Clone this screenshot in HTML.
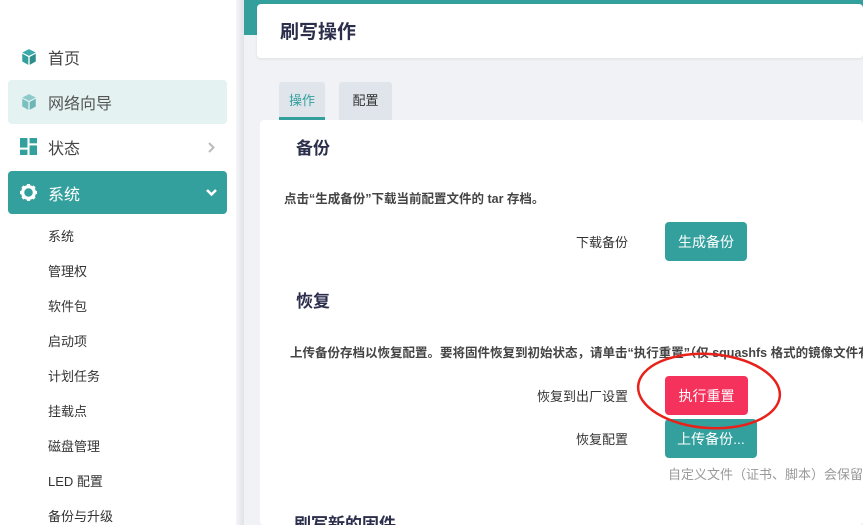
<!DOCTYPE html>
<html style="overflow:hidden;width:863px;height:525px"><head><meta charset="utf-8"><style>
*{margin:0;padding:0;box-sizing:border-box}
body{width:863px;height:525px;overflow:hidden;background:#f0f2f5;font-family:"Liberation Sans","Noto Sans CJK SC",sans-serif;position:relative;color:#333}
.side{position:absolute;left:0;top:0;width:236px;height:525px;background:#fff}
.shadow{position:absolute;left:236px;top:0;width:8px;height:525px;background:linear-gradient(90deg,#f4f6f9,#dfe2e6)}
.item{position:absolute;left:8px;width:219px;height:44px;border-radius:4px;font-size:16px;color:#444;display:flex;align-items:center;padding-left:40px}
.ic{position:absolute;left:12px;top:13px}
.sub{position:absolute;left:48px;font-size:13px;color:#333}
.abs{position:absolute}
.btn{position:absolute;left:665px;height:39px;border-radius:4px;color:#fff;font-size:14px;display:flex;align-items:center;justify-content:center}
.lbl{position:absolute;font-size:13px;color:#333;text-align:right;width:200px}
</style></head><body>
<div class="abs" style="left:244px;top:0;width:619px;height:35px;background:#34a09e"></div>
<div class="abs" style="left:257px;top:4px;width:606px;height:54px;background:#fff;border-radius:4px;box-shadow:0 1px 3px rgba(0,0,0,.08)"></div>
<div class="abs" style="left:280px;top:17px;font-size:19px;font-weight:bold;color:#2b2f4c">刷写操作</div>
<div class="abs" style="left:279px;top:82px;width:46px;height:38px;background:#dfe5ea;border-radius:3px 3px 0 0;border-bottom:3px solid #34a09e;color:#34a09e;font-size:13px;text-align:center;line-height:38px">操作</div>
<div class="abs" style="left:339px;top:82px;width:53px;height:38px;background:#dfe5ea;border-radius:3px 3px 0 0;color:#333;font-size:13px;text-align:center;line-height:38px">配置</div>
<div class="abs" style="left:260px;top:120px;width:603px;height:405px;background:#fff;border-radius:4px"></div>
<div class="abs" style="left:296px;top:134px;font-size:17px;font-weight:bold;color:#2b2f4c">备份</div>
<div class="abs" style="left:284px;top:188px;font-size:12.5px;font-weight:bold;color:#444">点击“生成备份”下载当前配置文件的 tar 存档。</div>
<div class="lbl" style="left:428px;top:232px">下载备份</div>
<div class="btn" style="top:222px;width:82px;background:#34a09e">生成备份</div>
<div class="abs" style="left:296px;top:287px;font-size:17px;font-weight:bold;color:#2b2f4c">恢复</div>
<div class="abs" style="left:290px;top:342px;font-size:12.5px;font-weight:bold;color:#444;white-space:nowrap">上传备份存档以恢复配置。要将固件恢复到初始状态，请单击“执行重置”（仅 squashfs 格式的镜像文件有效）。</div>
<div class="lbl" style="left:428px;top:386px">恢复到出厂设置</div>
<div class="btn" style="top:376px;width:83px;background:#f5325c">执行重置</div>
<div class="lbl" style="left:428px;top:429px">恢复配置</div>
<div class="btn" style="top:419px;width:92px;background:#34a09e">上传备份...</div>
<div class="abs" style="left:668px;top:464px;font-size:13px;color:#999;white-space:nowrap">自定义文件（证书、脚本）会保留</div>
<div class="abs" style="left:294px;top:513px;font-size:17px;font-weight:bold;color:#2b2f4c;line-height:24px">刷写新的固件</div>
<svg class="abs" style="left:620px;top:340px" width="180" height="100"><ellipse cx="89" cy="51" rx="71" ry="37" fill="none" stroke="#e8211b" stroke-width="2.5" transform="rotate(4 89 51)"/></svg>
<div class="side">
<div class="item" style="top:35px"><svg class="ic" width="18" height="18" viewBox="0 0 16 16"><path d="M8 1L14 4 8 7 2 4z" fill="#3aa9a9"/><path d="M2 5L7.4 8V15L2 12z" fill="#34a09e"/><path d="M14 5L8.6 8V15L14 12z" fill="#2d8e8c"/></svg>首页</div>
<div class="item" style="top:80px;background:#e4f2f2;color:#555"><svg class="ic" width="18" height="18" viewBox="0 0 16 16"><path d="M8 1L14 4 8 7 2 4z" fill="#8ccaca"/><path d="M2 5L7.4 8V15L2 12z" fill="#7bc0bf"/><path d="M14 5L8.6 8V15L14 12z" fill="#6db6b5"/></svg>网络向导</div>
<div class="item" style="top:125px"><svg class="ic" width="17" height="17" viewBox="0 0 16 16"><rect x="0" y="0" width="7" height="9" fill="#34a09e"/><rect x="9" y="0" width="7" height="5" fill="#34a09e"/><rect x="0" y="11" width="7" height="5" fill="#34a09e"/><rect x="9" y="7" width="7" height="9" fill="#34a09e"/></svg>状态<svg style="position:absolute;right:12px" width="7" height="11"><path d="M1 1L5.5 5.5 1 10" fill="none" stroke="#bbb" stroke-width="2"/></svg></div>
<div class="item" style="top:171px;height:43px;background:#34a09e;color:#fff"><svg class="ic" width="17" height="17" viewBox="0 0 16 16"><circle cx="8" cy="8" r="5.5" fill="none" stroke="#fff" stroke-width="3"/><g stroke="#fff" stroke-width="3"><path d="M8 0V3M8 13V16M0 8H3M13 8H16M2.3 2.3L4.4 4.4M11.6 11.6L13.7 13.7M2.3 13.7L4.4 11.6M11.6 4.4L13.7 2.3"/></g></svg>系统<svg style="position:absolute;right:10px" width="11" height="8"><path d="M1 1L5.5 5.5 10 1" fill="none" stroke="#fff" stroke-width="2.5"/></svg></div>
<div class="sub" style="top:226px">系统</div>
<div class="sub" style="top:261px">管理权</div>
<div class="sub" style="top:296px">软件包</div>
<div class="sub" style="top:331px">启动项</div>
<div class="sub" style="top:366px">计划任务</div>
<div class="sub" style="top:401px">挂载点</div>
<div class="sub" style="top:436px">磁盘管理</div>
<div class="sub" style="top:471px">LED 配置</div>
<div class="sub" style="top:506px">备份与升级</div>
</div>
<div class="shadow"></div>
</body></html>
